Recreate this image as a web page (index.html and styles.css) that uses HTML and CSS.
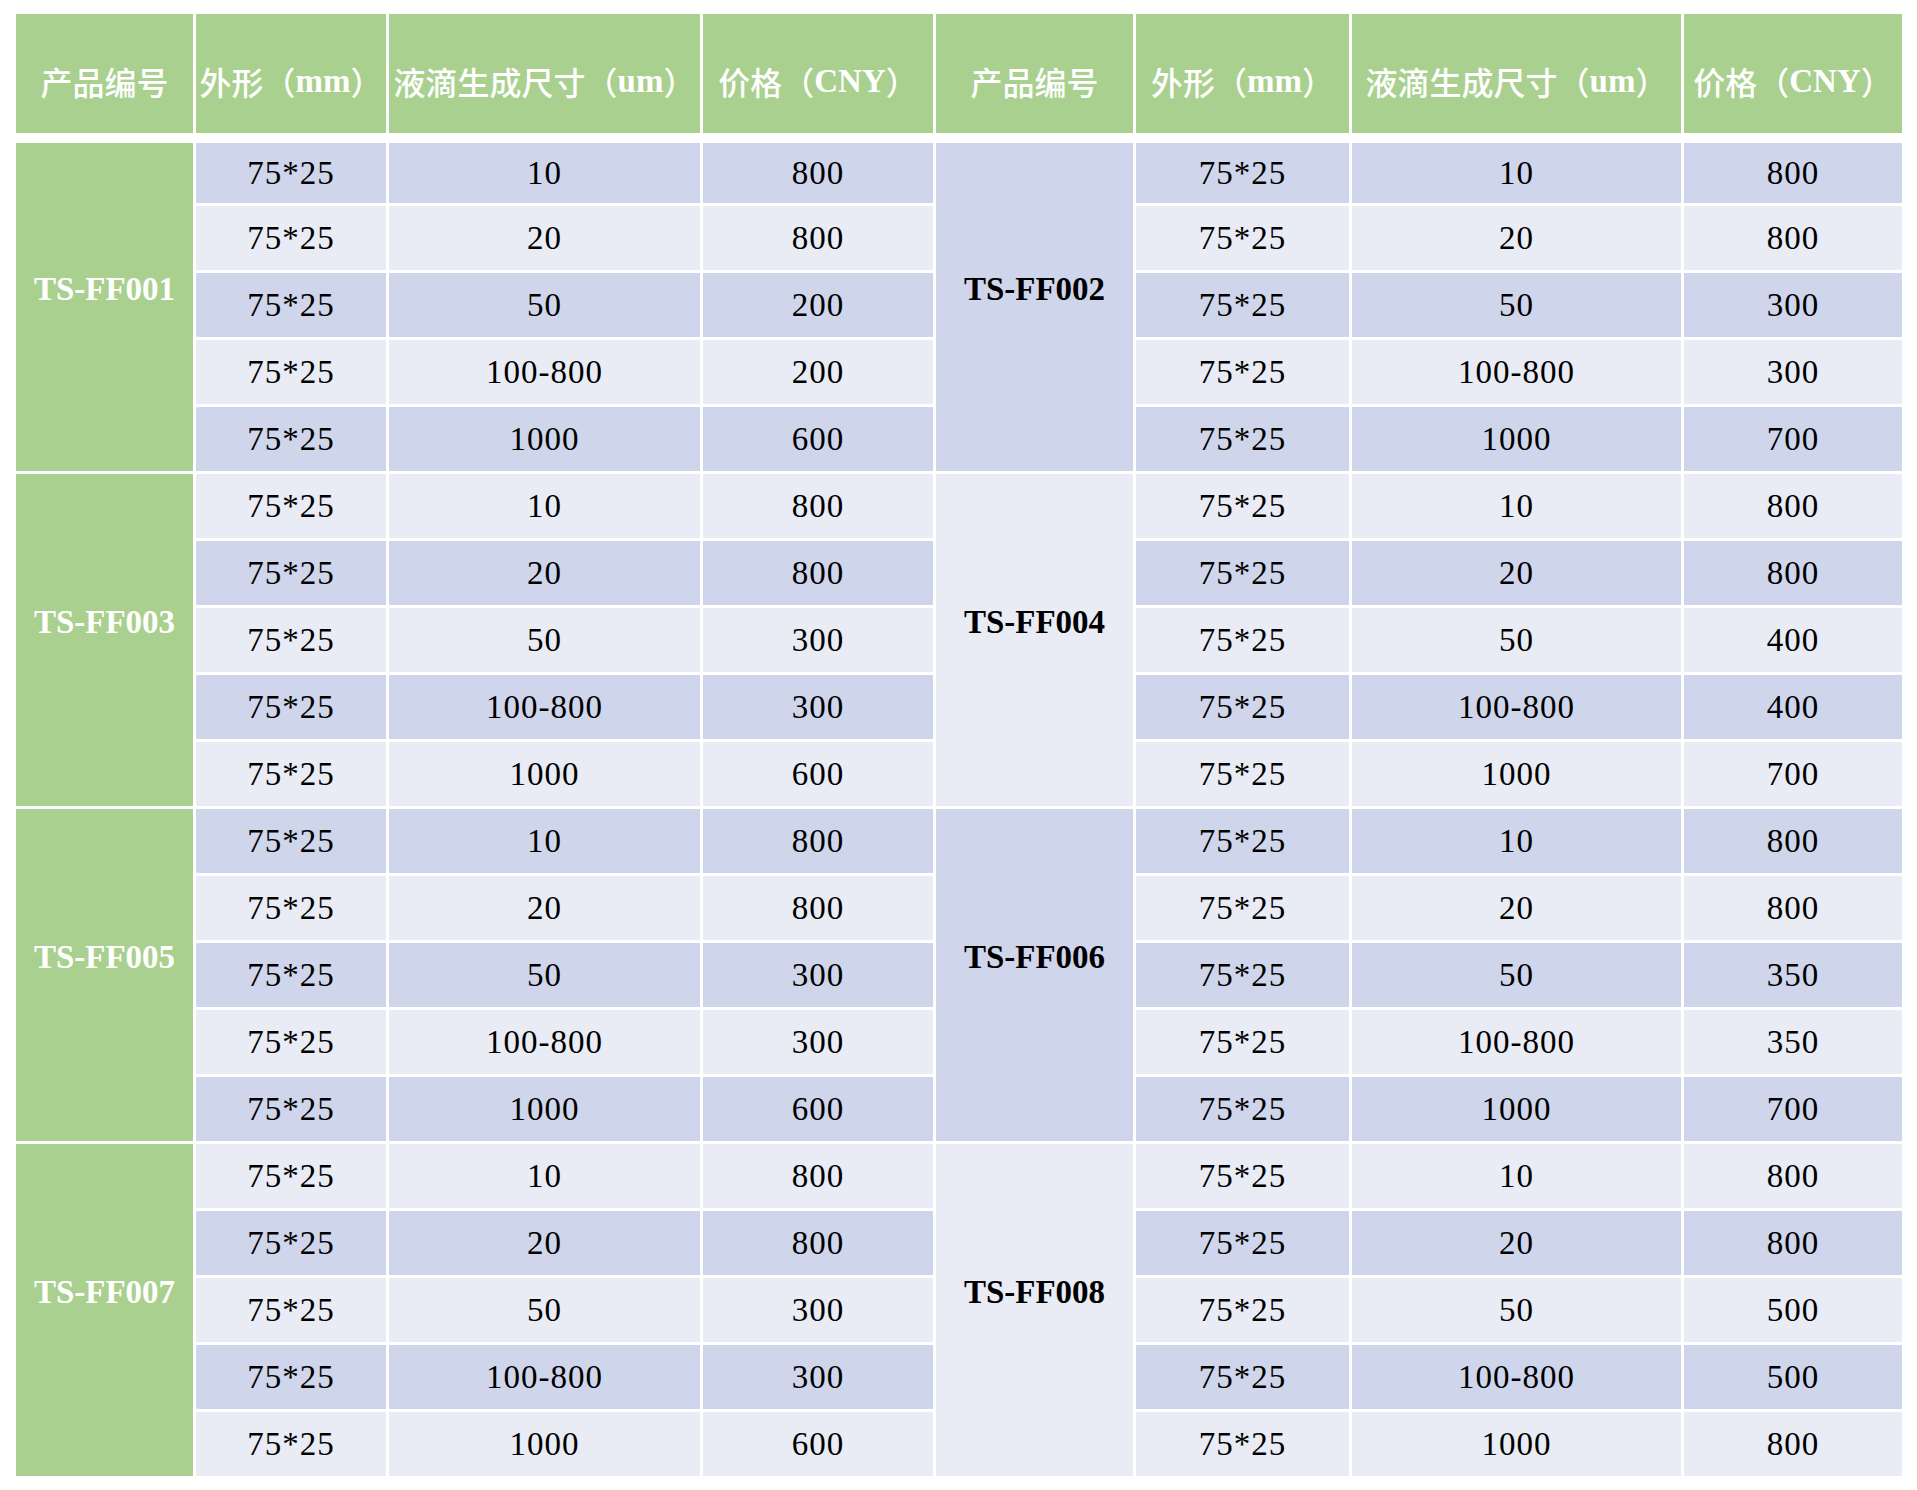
FILE: index.html
```html
<!DOCTYPE html>
<html lang="zh-CN">
<head>
<meta charset="utf-8">
<title>价格表</title>
<link rel="stylesheet" href="styles.css">
</head>
<body>
<div class="page">
<div class="sheet">
  <div class="hd">产品编号</div>
  <div class="hd">外形（<span class="lat">mm</span>）</div>
  <div class="hd">液滴生成尺寸（<span class="lat">um</span>）</div>
  <div class="hd">价格（<span class="lat">CNY</span>）</div>
  <div class="hd">产品编号</div>
  <div class="hd">外形（<span class="lat">mm</span>）</div>
  <div class="hd">液滴生成尺寸（<span class="lat">um</span>）</div>
  <div class="hd">价格（<span class="lat">CNY</span>）</div>

  <div class="lab">TS-FF001</div>
  <div class="c d">75*25</div><div class="c d">10</div><div class="c d">800</div>
  <div class="lab2 d">TS-FF002</div>
  <div class="c d">75*25</div><div class="c d">10</div><div class="c d">800</div>
  <div class="c l">75*25</div><div class="c l">20</div><div class="c l">800</div>
  <div class="c l">75*25</div><div class="c l">20</div><div class="c l">800</div>
  <div class="c d">75*25</div><div class="c d">50</div><div class="c d">200</div>
  <div class="c d">75*25</div><div class="c d">50</div><div class="c d">300</div>
  <div class="c l">75*25</div><div class="c l">100-800</div><div class="c l">200</div>
  <div class="c l">75*25</div><div class="c l">100-800</div><div class="c l">300</div>
  <div class="c d">75*25</div><div class="c d">1000</div><div class="c d">600</div>
  <div class="c d">75*25</div><div class="c d">1000</div><div class="c d">700</div>

  <div class="lab">TS-FF003</div>
  <div class="c l">75*25</div><div class="c l">10</div><div class="c l">800</div>
  <div class="lab2 l">TS-FF004</div>
  <div class="c l">75*25</div><div class="c l">10</div><div class="c l">800</div>
  <div class="c d">75*25</div><div class="c d">20</div><div class="c d">800</div>
  <div class="c d">75*25</div><div class="c d">20</div><div class="c d">800</div>
  <div class="c l">75*25</div><div class="c l">50</div><div class="c l">300</div>
  <div class="c l">75*25</div><div class="c l">50</div><div class="c l">400</div>
  <div class="c d">75*25</div><div class="c d">100-800</div><div class="c d">300</div>
  <div class="c d">75*25</div><div class="c d">100-800</div><div class="c d">400</div>
  <div class="c l">75*25</div><div class="c l">1000</div><div class="c l">600</div>
  <div class="c l">75*25</div><div class="c l">1000</div><div class="c l">700</div>

  <div class="lab">TS-FF005</div>
  <div class="c d">75*25</div><div class="c d">10</div><div class="c d">800</div>
  <div class="lab2 d">TS-FF006</div>
  <div class="c d">75*25</div><div class="c d">10</div><div class="c d">800</div>
  <div class="c l">75*25</div><div class="c l">20</div><div class="c l">800</div>
  <div class="c l">75*25</div><div class="c l">20</div><div class="c l">800</div>
  <div class="c d">75*25</div><div class="c d">50</div><div class="c d">300</div>
  <div class="c d">75*25</div><div class="c d">50</div><div class="c d">350</div>
  <div class="c l">75*25</div><div class="c l">100-800</div><div class="c l">300</div>
  <div class="c l">75*25</div><div class="c l">100-800</div><div class="c l">350</div>
  <div class="c d">75*25</div><div class="c d">1000</div><div class="c d">600</div>
  <div class="c d">75*25</div><div class="c d">1000</div><div class="c d">700</div>

  <div class="lab">TS-FF007</div>
  <div class="c l">75*25</div><div class="c l">10</div><div class="c l">800</div>
  <div class="lab2 l">TS-FF008</div>
  <div class="c l">75*25</div><div class="c l">10</div><div class="c l">800</div>
  <div class="c d">75*25</div><div class="c d">20</div><div class="c d">800</div>
  <div class="c d">75*25</div><div class="c d">20</div><div class="c d">800</div>
  <div class="c l">75*25</div><div class="c l">50</div><div class="c l">300</div>
  <div class="c l">75*25</div><div class="c l">50</div><div class="c l">500</div>
  <div class="c d">75*25</div><div class="c d">100-800</div><div class="c d">300</div>
  <div class="c d">75*25</div><div class="c d">100-800</div><div class="c d">500</div>
  <div class="c l">75*25</div><div class="c l">1000</div><div class="c l">600</div>
  <div class="c l">75*25</div><div class="c l">1000</div><div class="c l">800</div>
</div>
</div>
</body>
</html>
```
FILE: styles.css
```css
html, body {
  margin: 0;
  padding: 0;
  background: #ffffff;
}

.page {
  padding: 14px 0 0 16px;
}

.sheet {
  display: grid;
  grid-template-columns: 177px 190px 311px 230px 197px 213px 329px 218px;
  grid-template-rows: 126px 60px repeat(19, 64px);
  column-gap: 3px;
  row-gap: 3px;
  width: 1886px;
}

.hd {
  margin-bottom: 7px;
  background: #a9d08e;
  color: #ffffff;
  font-family: "Noto Sans CJK SC", sans-serif;
  font-weight: 500;
  font-size: 32px;
  line-height: 1.2;
  display: flex;
  align-items: center;
  justify-content: center;
  white-space: nowrap;
  padding-top: 16px;
  box-sizing: border-box;
}

.lat {
  font-family: "Liberation Serif", serif;
  font-weight: 700;
  font-size: 33px;
}

.c {
  font-family: "Liberation Serif", serif;
  font-size: 33px;
  letter-spacing: 1px;
  color: #000000;
  display: flex;
  align-items: center;
  justify-content: center;
  padding-top: 1px;
  box-sizing: border-box;
}

.d {
  background: #cfd5ea;
}

.l {
  background: #e9ebf5;
}

.lab,
.lab2 {
  grid-row: span 5;
  font-family: "Liberation Serif", serif;
  font-weight: 700;
  font-size: 33px;
  display: flex;
  align-items: center;
  justify-content: center;
  padding-bottom: 36px;
  box-sizing: border-box;
}

.lab {
  background: #a9d08e;
  color: #ffffff;
}

.lab2 {
  color: #000000;
}
```
